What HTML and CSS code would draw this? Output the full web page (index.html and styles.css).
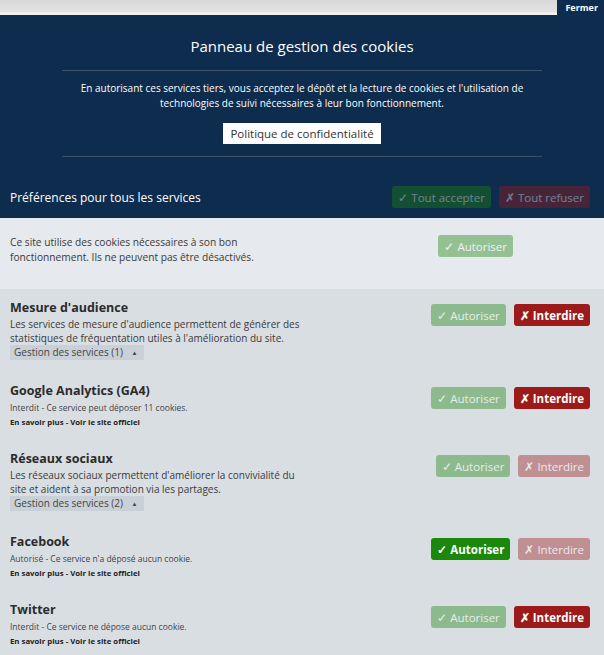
FILE: index.html
```html
<!DOCTYPE html>
<html lang="fr">
<head>
    <meta charset="UTF-8">
    <meta name="viewport" content="width=device-width, initial-scale=1.0">
    <title>Gestion des cookies</title>
    <link rel="stylesheet" href="styles.css">
</head>
<body>

<div class="topbar">
    <button class="close-panel">Fermer</button>
</div>

<div class="panel-head">
    <div class="panel-title">Panneau de gestion des cookies</div>
    <div class="intro">
        <div class="intro-text">
            En autorisant ces services tiers, vous acceptez le dépôt et la lecture de cookies et l'utilisation de<br>
            technologies de suivi nécessaires à leur bon fonctionnement.
        </div>
        <button class="privacy">Politique de confidentialité</button>
    </div>
    <div class="all-row">
        <div class="all-label">Préférences pour tous les services</div>
        <div class="actions">
            <button class="btn allow off">✓ Tout accepter</button>
            <button class="btn deny off">✗ Tout refuser</button>
        </div>
    </div>
</div>

<div class="mandatory">
    <div class="mandatory-text">
        Ce site utilise des cookies nécessaires à son bon<br>
        fonctionnement. Ils ne peuvent pas être désactivés.
    </div>
    <div class="actions">
        <button class="btn allow off">✓ Autoriser</button>
    </div>
</div>

<div class="services">
    <div class="row category">
        <div class="info">
            <div class="name">Mesure d'audience</div>
            <div class="desc">
                Les services de mesure d'audience permettent de générer des<br>
                statistiques de fréquentation utiles à l'amélioration du site.
            </div>
            <div class="toggle">Gestion des services (1) <span class="arrow">▲</span></div>
        </div>
        <div class="actions">
            <button class="btn allow off">✓ Autoriser</button>
            <button class="btn deny on">✗ Interdire</button>
        </div>
    </div>

    <div class="row service">
        <div class="info">
            <div class="name">Google Analytics (GA4)</div>
            <div class="status">Interdit - Ce service peut déposer 11 cookies.</div>
            <div class="links">En savoir plus - Voir le site officiel</div>
        </div>
        <div class="actions">
            <button class="btn allow off">✓ Autoriser</button>
            <button class="btn deny on">✗ Interdire</button>
        </div>
    </div>

    <div class="row category">
        <div class="info">
            <div class="name">Réseaux sociaux</div>
            <div class="desc">
                Les réseaux sociaux permettent d'améliorer la convivialité du<br>
                site et aident à sa promotion via les partages.
            </div>
            <div class="toggle">Gestion des services (2) <span class="arrow">▲</span></div>
        </div>
        <div class="actions">
            <button class="btn allow off">✓ Autoriser</button>
            <button class="btn deny off">✗ Interdire</button>
        </div>
    </div>

    <div class="row service">
        <div class="info">
            <div class="name">Facebook</div>
            <div class="status">Autorisé - Ce service n'a déposé aucun cookie.</div>
            <div class="links">En savoir plus - Voir le site officiel</div>
        </div>
        <div class="actions">
            <button class="btn allow on">✓ Autoriser</button>
            <button class="btn deny off">✗ Interdire</button>
        </div>
    </div>

    <div class="row service">
        <div class="info">
            <div class="name">Twitter</div>
            <div class="status">Interdit - Ce service ne dépose aucun cookie.</div>
            <div class="links">En savoir plus - Voir le site officiel</div>
        </div>
        <div class="actions">
            <button class="btn allow off">✓ Autoriser</button>
            <button class="btn deny on">✗ Interdire</button>
        </div>
    </div>
</div>

</body>
</html>
```
FILE: styles.css
```css
body {
    margin: 0;
    font-family: 'Open Sans', sans-serif;
    background: #d9dee3;
    color: #333;
}

button {
    font-family: inherit;
    border: none;
    cursor: pointer;
}

.topbar {
    display: flex;
    justify-content: flex-end;
    height: 15px;
    background: linear-gradient(to bottom, #d8d8d8, #e2e2e2 80%, #f2f2f2 86%, #f2f2f2);
}

.close-panel {
    background: #0e2c4d;
    color: #fff;
    font-size: 9px;
    font-weight: bold;
    padding: 0 6px 0 8px;
    height: 15px;
    line-height: 15px;
}

.panel-head {
    background: #0e2c4d;
    color: #fff;
    padding-top: 21px;
}

.panel-title {
    text-align: center;
    font-size: 15px;
    line-height: 20px;
    padding-bottom: 14px;
}

.intro {
    margin: 0 62px;
    border-top: 1px solid #3b526d;
    border-bottom: 1px solid #3b526d;
    padding: 10px 0 12px;
    text-align: center;
}

.intro-text {
    font-size: 10px;
    line-height: 15px;
}

.privacy {
    margin-top: 12px;
    background: #fff;
    color: #333;
    font-size: 11.5px;
    height: 21px;
    padding: 0 7px;
}

.all-row {
    display: flex;
    justify-content: space-between;
    align-items: center;
    padding: 29px 14px 10px 10px;
}

.all-label {
    font-size: 12px;
}

.actions {
    display: flex;
    gap: 8px;
    flex-shrink: 0;
}

.btn {
    height: 22px;
    padding: 0 6px;
    border-radius: 3px;
    color: #fff;
    font-size: 11.5px;
    white-space: nowrap;
}

.btn.allow {
    background: #1b870b;
}

.btn.deny {
    background: #9c1a1a;
}

.btn.on {
    font-weight: bold;
}

.btn.off {
    opacity: 0.4;
}

.mandatory {
    display: flex;
    justify-content: space-between;
    align-items: flex-start;
    background: #e6e9ed;
    padding: 17px 91px 24px 10px;
    font-size: 10.2px;
    line-height: 15px;
    color: #3a3a3a;
}

.row {
    display: flex;
    justify-content: space-between;
    align-items: flex-start;
    padding: 10px 14px 10px 10px;
}

.row.category {
    padding-bottom: 12px;
}

.row .actions {
    margin-top: 5px;
}

.name {
    font-size: 12.5px;
    font-weight: bold;
    line-height: 18px;
    color: #2b2b2b;
}

.desc {
    font-size: 10px;
    line-height: 14px;
    color: #3a3a3a;
}

.toggle {
    width: fit-content;
    background: #c9d0d8;
    color: #444;
    font-size: 10px;
    line-height: 14px;
    padding: 0 6px 0 4px;
}

.arrow {
    font-size: 6px;
    margin-left: 6px;
    vertical-align: 1px;
}

.status {
    font-size: 8.5px;
    line-height: 15px;
    color: #444;
}

.links {
    font-size: 7.8px;
    font-weight: bold;
    line-height: 15px;
    color: #222;
}
```
